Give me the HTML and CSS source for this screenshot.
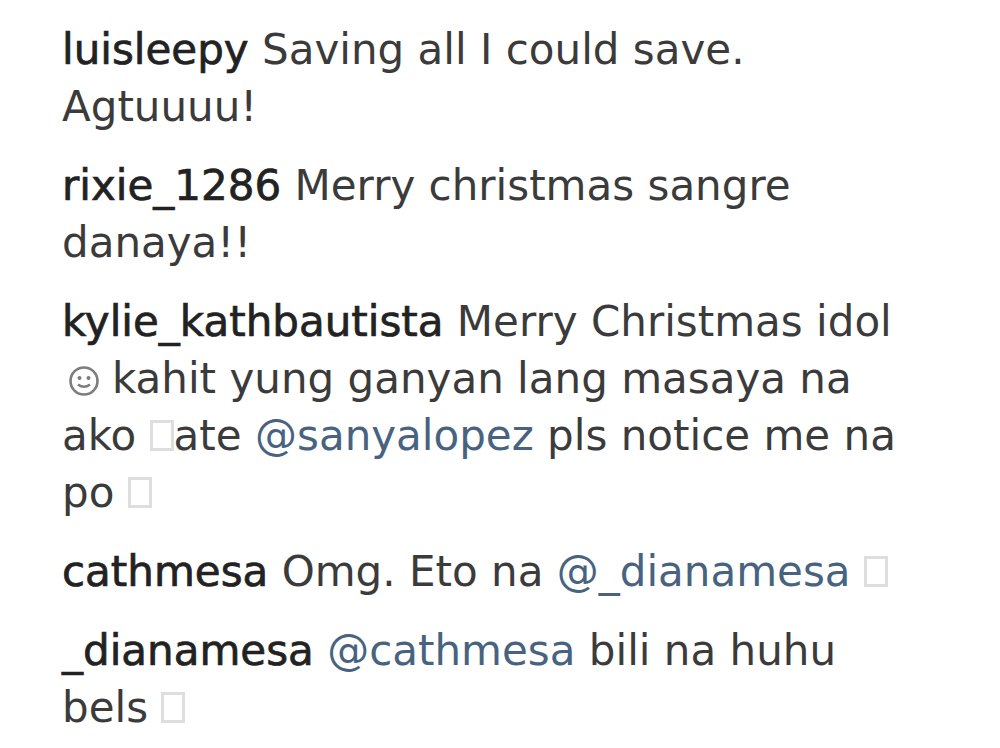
FILE: index.html
```html
<!DOCTYPE html>
<html lang="en">
<head>
  <meta charset="UTF-8" />
  <meta name="viewport" content="width=device-width, initial-scale=1.0"/>
  <title>Comments</title>
  <link rel="stylesheet" href="styles.css">
</head>
<body>
  <!-- Daftar komentar -->
  <ul class="comments">
    <li class="comment">
      <a class="user">luisleepy</a> Saving all I could save. Agtuuuu!
    </li>
    <li class="comment">
      <a class="user">rixie_1286</a> Merry christmas sangre danaya!!
    </li>
    <li class="comment">
      <a class="user">kylie_kathbautista</a> Merry Christmas idol
      <svg class="smiley" viewBox="0 0 32 32" width="32" height="32">
        <circle cx="16" cy="16" r="13.5" fill="none" stroke="#7d7d7d" stroke-width="2.6"/>
        <circle cx="11.5" cy="13" r="2" fill="#7d7d7d"/>
        <circle cx="20.5" cy="13" r="2" fill="#7d7d7d"/>
        <path d="M10 19.5 Q16 24 22 19.5" fill="none" stroke="#7d7d7d" stroke-width="2.4"/>
      </svg>kahit yung ganyan lang masaya na ako <span class="tofu"></span>ate <a class="mention">@sanyalopez</a> pls notice me na po <span class="tofu"></span>
    </li>
    <li class="comment">
      <a class="user">cathmesa</a> Omg. Eto na <a class="mention">@_dianamesa</a> <span class="tofu"></span>
    </li>
    <li class="comment">
      <a class="user">_dianamesa</a> <a class="mention">@cathmesa</a> bili na huhu bels <span class="tofu"></span>
    </li>
  </ul>
</body>
</html>
```
FILE: styles.css
```css
/* ===== Reset & Font ===== */
* {
  margin: 0;
  padding: 0;
  box-sizing: border-box;
}
body {
  background: #fff;
  font-family: 'DejaVu Sans', 'Open Sans', sans-serif;
  color: #3b3b3b;
}

/* ===== Komentar ===== */
.comments {
  list-style: none;
  width: 930px;
  padding: 21px 0 0 62px;
  display: flex;
  flex-direction: column;
  gap: 22px;
}
.comment {
  font-size: 42px;
  line-height: 57px;
}
.user {
  color: #222;
  -webkit-text-stroke: 0.7px #222;
}
.mention {
  color: #48637f;
}
.smiley {
  vertical-align: -4px;
  margin: 0 12px 0 6px;
}
.tofu {
  display: inline-block;
  width: 24px;
  height: 31px;
  border: 3px solid #dedede;
  vertical-align: -1px;
}
```
